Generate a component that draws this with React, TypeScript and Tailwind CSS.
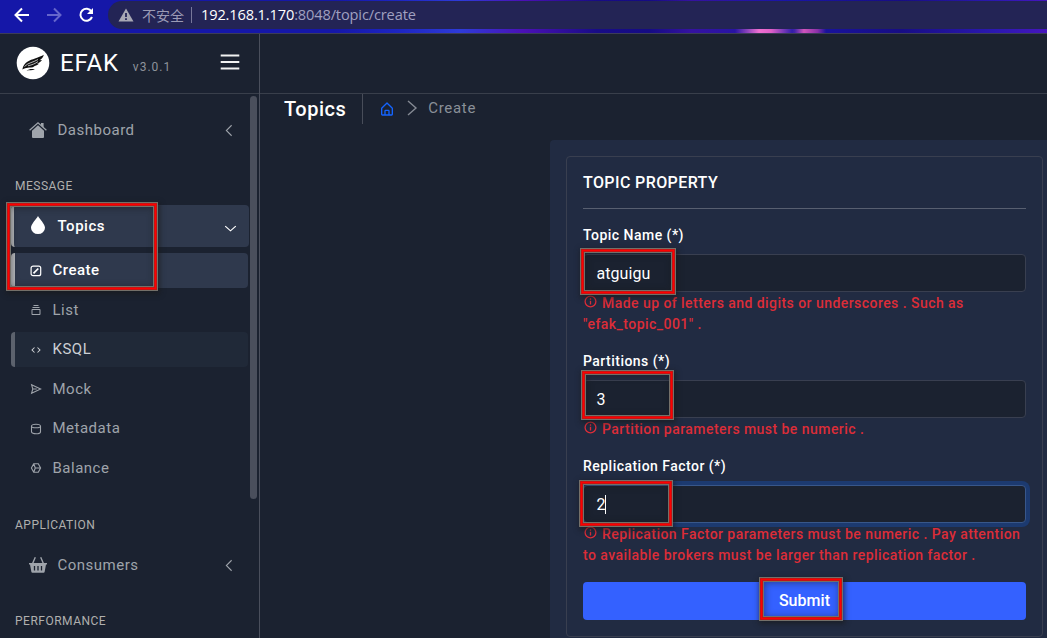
import React from 'react';
import { BiCollection, BiCode, BiHomeAlt } from 'react-icons/bi';

function Chevron({ dir, className }: { dir: 'left' | 'down' | 'right'; className: string }) {
  const d = { left: 'M11.5 1.5 4.5 8l7 6.5', down: 'M1.5 4.5 8 11.5l6.5-7', right: 'M4 1l8 7-8 7' }[dir];
  return (
    <svg viewBox="0 0 16 16" fill="none" stroke="currentColor" strokeWidth="1.4" preserveAspectRatio="none" className={className}>
      <path d={d} />
    </svg>
  );
}

function House() {
  return (
    <svg viewBox="0 0 18 18" className="h-[18px] w-[18px]">
      <path d="M9 4.2 15 9.800V16a1 1 0 0 1-1 1H4a1 1 0 0 1-1-1V9.800z" fill="currentColor" />
      <path d="M12 2h2.600v5L12 4.600z" fill="currentColor" />
      <path d="M.6 9.300 9 1.700l8.400 7.600" fill="none" stroke="currentColor" strokeWidth="1.200" />
    </svg>
  );
}

function Basket() {
  return (
    <svg viewBox="0 0 18 18" className="h-[18px] w-[18px]">
      <path d="M0 7h18v1.600h-1L15.600 16a1 1 0 0 1-1 .8H3.400a1 1 0 0 1-1-.8L1 8.600H0z" fill="currentColor" />
      <path d="M3.600 7.500 6.300 1.300M14.400 7.500 11.700 1.300" stroke="currentColor" strokeWidth="1.400" />
      <path d="M5.500 10v4.400M9 10v4.400M12.500 10v4.400" stroke="#1b2230" strokeWidth="1.300" />
    </svg>
  );
}

function Info() {
  return (
    <svg viewBox="0 0 14 14" fill="none" stroke="currentColor" strokeWidth="1.3" className="mr-[5px] inline h-[14px] w-[14px] align-[-1px]">
      <circle cx="7.500" cy="6.500" r="5.400" />
      <path d="M7.500 5.800v3.800M7.500 3.300v1.400" />
    </svg>
  );
}

function EditSquare() {
  return (
    <svg viewBox="0 0 12 12" fill="none" stroke="currentColor" strokeWidth="1.200" className="h-3 w-3">
      <rect x="1.100" y="1.100" width="9.600" height="9.600" rx="2" />
      <path d="M3.500 8.400 8.300 3.500" strokeWidth="1.700" />
    </svg>
  );
}

function Send() {
  return (
    <svg viewBox="0 0 12 12" fill="none" stroke="currentColor" strokeWidth="1.100" className="h-3 w-3">
      <path d="M1.600 1.800 10.600 6l-9 4.200L2.800 6zM2.800 6h4" />
    </svg>
  );
}

function Cylinder() {
  return (
    <svg viewBox="0 0 12 12" fill="none" stroke="currentColor" strokeWidth="1.100" className="h-3 w-3">
      <path d="M1.500 3.300C1.500 .6 10.500 .6 10.500 3.300v5.400C10.500 11.400 1.500 11.400 1.500 8.700zM1.500 3.300C1.500 5.300 10.500 5.300 10.500 3.300" />
    </svg>
  );
}

function Wheel() {
  return (
    <svg viewBox="0 0 12 12" fill="none" stroke="currentColor" strokeWidth="1.100" className="h-3 w-3">
      <path d="M3.700 1.700h4.600L10.600 6l-2.300 4.300H3.700L1.400 6zM3.700 1.700 5.300 6l-1.600 4.300M5.300 6h5.300" />
    </svg>
  );
}

function Mark({ className }: { className: string }) {
  return (
    <div
      className={`pointer-events-none absolute z-10 shadow-[inset_0_0_0_1px_#747069,inset_0_0_0_2px_#c41414,inset_0_0_0_3px_#ff0000,inset_0_0_0_4px_#c41414,inset_0_0_0_5px_#747069,inset_1px_1px_7px_5px_rgba(25,25,25,0.45),1px_2px_5px_1px_rgba(25,25,25,0.6)] ${className}`}
    />
  );
}

function Sub({ icon, label, state }: { icon: React.ReactNode; label: string; state?: 'active' | 'hover' }) {
  const look =
    state === 'active'
      ? 'border-[#b9bcc0] bg-[#2f394d] text-white font-medium'
      : state === 'hover'
        ? 'border-[#5c626d] bg-[#202938] text-[#cdd0d4]'
        : 'border-transparent text-[#9fa4ab]';
  return (
    <div className={`mb-[4.5px] ml-[11px] flex h-[35px] w-[237px] items-center rounded-[4px] border-l-4 pl-[15px] text-[15px] tracking-[0.5px] ${look}`}>
      <span className="flex w-3 justify-center text-[12px]">{icon}</span>
      <span className="ml-[10.5px]">{label}</span>
    </div>
  );
}

function Field({ label, value, error, focused, mark, className }: { label: string; value: string; error: string; focused?: boolean; mark: string; className: string }) {
  return (
    <div className={className}>
      <div className="mb-2 h-[21px] text-[14px] leading-[21px] font-medium tracking-[0.47px]">{label}</div>
      <div
        className={`relative flex h-[38px] items-center rounded-[4px] border bg-[#1b2230] px-3 pt-px text-[16px] tracking-[0.05px] text-white ${focused ? 'border-[#38578a] shadow-[0_0_0_4px_#1c3a70]' : 'border-[#393f50]'}`}
      >
        <span className="pl-[0.5px]">{value}</span>
        {focused && <span className="-ml-px h-[19px] w-px bg-white" />}
        <Mark className={mark} />
      </div>
      <div className="mt-px text-[14px] leading-[21px] font-medium tracking-[0.45px] text-[#dc2d38]">
        <Info />
        {error}
      </div>
    </div>
  );
}

export default function App() {
  return (
    <div className="flex h-[638px] w-[1047px] flex-col overflow-hidden bg-[#1b2230] font-['Roboto','Noto_Sans_CJK_SC',sans-serif] tracking-[0.5px] text-white">
      <div className="relative flex h-[34px] shrink-0 items-start border-b border-[#3c3c58] bg-[linear-gradient(90deg,#1517a8_0%,#1517a8_32%,#1d25c2_38%,#2e3bd8_44%,#4b10b5_50%,#180c86_57%,#150b84_62%,#3512a0_66%,#1915a8_75%,#170d84_86%,#2b18b0_95%,#4615bd_100%)]">
        <svg viewBox="0 0 108 30" fill="none" className="h-[30px] w-[108px] shrink-0">
          <g strokeWidth="2">
            <path d="M29 15H16M22 8.5 15.5 15l6.5 6.5" stroke="#fff" />
            <path d="M47 15h13M54 8.5 60.5 15 54 21.5" stroke="#6666cc" />
            <path d="M91.5 11.5A6 6 0 1 0 92 17" stroke="#fff" />
          </g>
          <path d="M93 8v6h-6z" fill="#fff" />
        </svg>
        <div className="mt-px flex h-7 flex-1 items-center rounded-l-full bg-[#232455] pl-[10px] tracking-normal">
          <svg viewBox="0 0 16 14" className="h-[14px] w-4">
            <path d="M8 .5 15.5 13.5H.5z" fill="#a8a8b4" />
            <path d="M7.1 5h1.8v4H7.1zM7.1 10.3h1.8V12H7.1z" fill="#232455" />
          </svg>
          <span className="mt-[-1px] ml-2 font-['Noto_Sans_CJK_SC',sans-serif] text-[14px] leading-7 text-[#9b9bb5]">不安全</span>
          <span className="ml-[7px] h-[16px] w-px bg-[#77779a]" />
          <span className="mt-[-2px] ml-[9px] font-['Open_Sans','Noto_Sans',sans-serif] text-[14.6px] leading-7 tracking-[-0.14px] text-[#a0a0c0]">
            <span className="text-white">192.168.1.170</span>:8048/topic/create
          </span>
        </div>
        <div className="absolute top-[29px] left-[735px] h-1 w-[60px] bg-[linear-gradient(90deg,transparent,#f070d0_40%,#e060c8_60%,transparent)]" />
        <div className="absolute top-[29px] left-[792px] h-1 w-[34px] bg-[linear-gradient(90deg,transparent,#d055bb_35%,#8a30a8_75%,transparent)]" />
      </div>

      <div className="flex min-h-0 flex-1">
        <aside className="relative flex w-[260px] shrink-0 flex-col border-r border-[#4a4f5c]">
          <div className="flex h-[60px] shrink-0 items-center border-b border-[#393f4b] pl-[15.5px]">
            <svg viewBox="0 0 34 34" className="mt-[-1px] h-[34px] w-[34px]">
              <circle cx="17" cy="17" r="16.300" fill="#fff" />
              <path d="M6.300 23.500C8 15.500 14 14.300 19 12.500c4-1.400 6.500-2.500 8.800-3.700-.5 2.500-2.200 4.200-4.300 5.500l2.500-.3c-1.300 2-3 3-5 3.500l2 .2c-1.800 1.700-4 2.300-6 2.400l1.700.5c-2.800 1.300-4.800.8-7 1.100-2 .3-3 .5-5.400 1.800z" fill="#111" />
              <path d="M10.500 24.800c2.500-2 5-2.200 8.500-1.600-3 1.300-5.500.5-8.500 1.600z" fill="#111" />
              <path d="M8.500 20.500c4-4 8-3.800 13.500-7M12 19.800c4-1 7-2 10-4.200" stroke="#fff" strokeWidth=".7" fill="none" />
            </svg>
            <span className="mt-[-2px] ml-[10.5px] text-[24px] leading-none tracking-[0.8px]">EFAK</span>
            <span className="mt-[7px] ml-[14px] text-[12px] leading-none tracking-[1px] text-[#8e939b]">v3.0.1</span>
            <svg viewBox="0 0 20 16" stroke="#f2f2f2" strokeWidth="1.800" className="mt-[-4px] ml-[49px] h-4 w-5">
              <path d="M.7 1.500h18.600M.7 8h18.600M.7 14.500h18.600" />
            </svg>
          </div>
          <div className="absolute top-[62px] left-[250px] h-[403px] w-[7px] rounded-full bg-[#4a4f5c]" />
          <div className="mt-[15px] ml-[11px] flex h-[42px] shrink-0 items-center pl-[18px] text-[15px] text-[#9fa4ab]">
            <House />
            <span className="ml-[10.5px] w-[165.5px]">Dashboard</span>
            <Chevron dir="left" className="h-[13px] w-3" />
          </div>
          <div className="mt-[26px] ml-[15px] h-[18px] shrink-0 text-[12px] leading-[18px] text-[#b0b0ae]">MESSAGE</div>
          <div className="relative mt-[10px]">
            <div className="mb-[6px] ml-[11px] flex h-[42px] w-[238px] items-center rounded-[4px] border-l-[3px] border-[#b9bcc0] bg-[#2f394d] pl-[15px] text-[15px] font-medium">
              <svg viewBox="0 0 16 20" className="mt-[-2px] h-5 w-[18px]">
                <path d="M8 1C6.500 4 1 9 1 12.700a7 6.300 0 0 0 14 0C15 9 9.500 4 8 1z" fill="#fff" />
              </svg>
              <span className="ml-[10.5px] w-[166.5px]">Topics</span>
              <Chevron dir="down" className="mt-1 h-[11px] w-[13px]" />
            </div>
            <Sub icon={<EditSquare />} label="Create" state="active" />
            <Sub icon={<BiCollection />} label="List" />
            <Sub icon={<BiCode />} label="KSQL" state="hover" />
            <Sub icon={<Send />} label="Mock" />
            <Sub icon={<Cylinder />} label="Metadata" />
            <Sub icon={<Wheel />} label="Balance" />
            <Mark className="top-[-3px] left-[6px] h-[89px] w-[152px]" />
          </div>
          <div className="mt-[26px] ml-[15px] h-[18px] shrink-0 text-[12px] leading-[18px] text-[#b0b0ae]">APPLICATION</div>
          <div className="mt-[10px] ml-[11px] flex h-[42px] shrink-0 items-center pl-[18px] text-[15px] text-[#9fa4ab]">
            <Basket />
            <span className="ml-[10.5px] w-[165.5px]">Consumers</span>
            <Chevron dir="left" className="h-[13px] w-3" />
          </div>
          <div className="mt-[26px] ml-[15px] h-[18px] shrink-0 text-[12px] leading-[18px] text-[#b0b0ae]">PERFORMANCE</div>
        </aside>

        <main className="flex min-w-0 flex-1 flex-col">
          <div className="h-[60px] shrink-0 border-b border-[#393f4b]" />
          <div className="flex h-[30px] shrink-0 items-center pl-6">
            <h1 className="text-[20px] leading-[30px] font-medium">Topics</h1>
            <span className="ml-4 h-[30px] w-px bg-[#484d59]" />
            <BiHomeAlt className="mt-[-1px] ml-[16px] h-4 w-4 text-[#1464ff]" />
            <Chevron dir="right" className="mt-[-2px] ml-[9px] h-4 w-4 text-[#858a93]" />
            <span className="mt-[-2px] ml-[8px] text-[15px] tracking-[0.7px] text-[#8a9098]">Create</span>
          </div>
          <section className="mt-4 ml-[290px] h-[498px] rounded-tl-[4px] bg-[#212b42] pt-4 pl-4">
            <div className="h-[481px] w-[477px] rounded-[4px] border border-[#393f50] px-4">
              <h2 className="h-[52px] border-b border-[#585f70] pt-[14px] text-[16px] leading-6 font-medium tracking-[0.4px]">TOPIC PROPERTY</h2>
              <Field className="mt-4" label="Topic Name (*)" value="atguigu" error={'Made up of letters and digits or underscores . Such as "efak_topic_001" .'} mark="top-[-7px] left-[-4px] h-[47px] w-[96px]" />
              <Field className="mt-4" label="Partitions (*)" value="3" error="Partition parameters must be numeric ." mark="top-[-11px] left-[-3px] h-[50px] w-[93px]" />
              <Field className="mt-4" label="Replication Factor (*)" value="2" focused error="Replication Factor parameters must be numeric . Pay attention to available brokers must be larger than replication factor ." mark="top-[-6px] left-[-5px] h-[47px] w-[94px]" />
              <button className="relative mt-4 flex h-[38px] w-full items-center justify-center rounded-[4px] bg-[#3461ff] text-[16px] font-medium tracking-[0.05px]">
                Submit
                <Mark className="top-[-5px] left-[176px] h-[44px] w-[84px]" />
              </button>
            </div>
          </section>
        </main>
      </div>
    </div>
  );
}
